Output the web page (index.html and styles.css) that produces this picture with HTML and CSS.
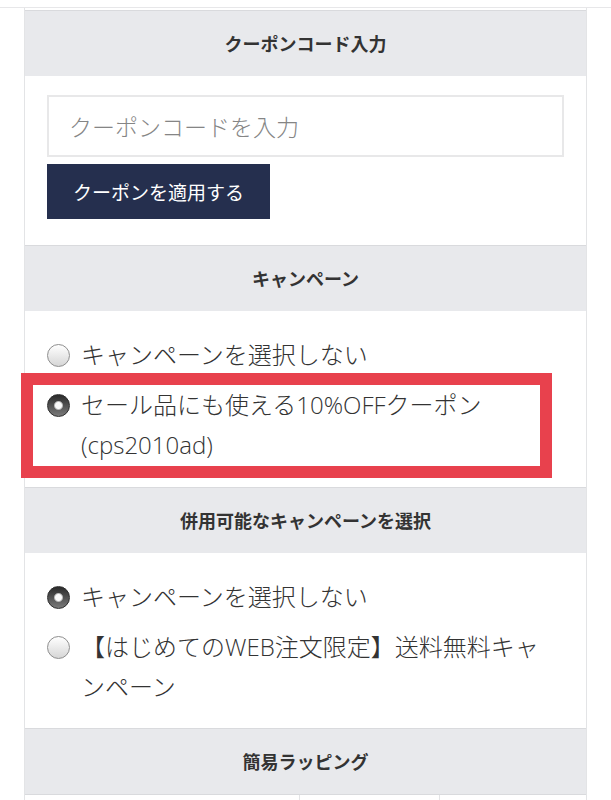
FILE: index.html
```html
<!DOCTYPE html>
<html lang="ja">
<head>
  <meta charset="UTF-8">
  <meta name="viewport" content="width=device-width, initial-scale=1.0">
  <title>クーポン・キャンペーン</title>
  <link rel="stylesheet" href="styles.css">
</head>
<body>
  <div class="topline"></div>
  <div class="panel">
    <section class="block">
      <h3 class="block-title">クーポンコード入力</h3>
      <div class="block-body coupon">
        <input type="text" class="coupon-input" placeholder="クーポンコードを入力">
        <button type="button" class="coupon-btn">クーポンを適用する</button>
      </div>
    </section>

    <section class="block">
      <h3 class="block-title">キャンペーン</h3>
      <div class="block-body options">
        <label class="option"><span class="radio"></span><span class="option-text">キャンペーンを選択しない</span></label>
        <label class="option marked"><span class="radio checked"></span><span class="option-text">セール品にも使える10%OFFクーポン(cps2010ad)</span><span class="highlight"></span></label>
      </div>
    </section>

    <section class="block">
      <h3 class="block-title">併用可能なキャンペーンを選択</h3>
      <div class="block-body options options-last">
        <label class="option"><span class="radio checked"></span><span class="option-text">キャンペーンを選択しない</span></label>
        <label class="option"><span class="radio"></span><span class="option-text">【はじめてのWEB注文限定】送料無料キャンペーン</span></label>
      </div>
    </section>

    <section class="block">
      <h3 class="block-title">簡易ラッピング</h3>
      <div class="wrap-row">
        <div class="wrap-cell wide"></div>
        <div class="wrap-cell"></div>
        <div class="wrap-cell"></div>
      </div>
    </section>
  </div>
</body>
</html>
```

FILE: styles.css
```css
body {
  margin: 0;
  background-color: #fff;
  font-family: "Noto Sans CJK JP", "Noto Sans", sans-serif;
  color: #333;
}

.topline {
  margin-top: 7px;
  border-top: 1px solid #e7e7e9;
}

.panel {
  margin: 0 24px;
  padding-top: 2px;
  border-left: 1px solid #e3e4e6;
  border-right: 1px solid #e3e4e6;
}

.block-title {
  margin: 0;
  height: 65px;
  line-height: 65px;
  border-top: 1px solid #d9dadd;
  background-color: #e8e9ec;
  text-align: center;
  font-size: 18px;
  font-weight: bold;
  color: #333;
}

.block-body {
  padding: 19px 22px 26px;
}

.coupon-input {
  display: block;
  width: 100%;
  height: 62px;
  margin: 0 0 7px;
  padding: 0 20px;
  border: 2px solid #e8e8e9;
  box-sizing: border-box;
  font-family: inherit;
  font-size: 23px;
  font-weight: 300;
  color: #333;
  outline: none;
}

.coupon-input::placeholder {
  color: #858585;
}

.coupon-btn {
  display: block;
  height: 55px;
  padding: 0 26px;
  border: none;
  background-color: #252f4e;
  color: #fff;
  font-family: inherit;
  font-size: 19px;
  cursor: pointer;
}

.options {
  display: flex;
  flex-direction: column;
  gap: 10px;
  padding: 24px 34px 22px 22px;
}

.options-last {
  padding-bottom: 21px;
}

.option {
  position: relative;
  display: flex;
  align-items: flex-start;
  gap: 11px;
  font-family: "Open Sans", "Noto Sans CJK JP", sans-serif;
  font-size: 24px;
  font-weight: 300;
  line-height: 40px;
  color: #333;
}

.radio {
  flex: none;
  width: 21px;
  height: 21px;
  margin-top: 9px;
  border: 1px solid #8e8e8e;
  border-radius: 50%;
  background: linear-gradient(#ffffff, #d6d6d6);
}

.radio.checked {
  border-color: #2c2c2c;
  background:
    radial-gradient(circle, #fafafa 0 3px, #b9b9b9 4px, transparent 5px),
    linear-gradient(#2a2a2a, #7a7a7a);
}

.highlight {
  position: absolute;
  top: -12px;
  left: -26px;
  width: 531px;
  height: 105px;
  border: 12px solid #e8414d;
  box-sizing: border-box;
  pointer-events: none;
}

.wrap-row {
  display: flex;
  height: 20px;
  border-top: 1px solid #d9dadd;
}

.wrap-cell {
  flex: 0 0 139px;
  border-left: 1px solid #e3e4e6;
}

.wrap-cell.wide {
  flex: 0 0 274px;
  border-left: none;
}
```
